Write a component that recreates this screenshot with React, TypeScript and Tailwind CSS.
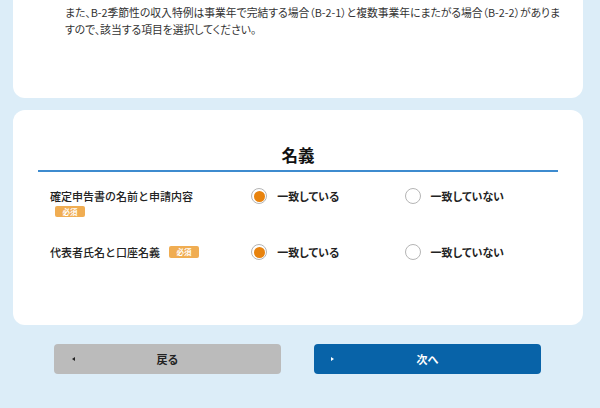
const font = { fontFamily: '"Noto Sans CJK JP", "Noto Sans", sans-serif' }

type Item = { label: string; inlineBadge: boolean; value: 'yes' | 'no' }

const items: Item[] = [
  { label: '確定申告書の名前と申請内容', inlineBadge: false, value: 'yes' },
  { label: '代表者氏名と口座名義', inlineBadge: true, value: 'yes' },
]

function Badge({ className = '' }: { className?: string }) {
  return (
    <span
      className={`flex h-[11px] w-[30px] items-center justify-center rounded-[2px] bg-[#f0ad52] text-[7.5px] font-bold leading-none text-white ${className}`}
    >
      必須
    </span>
  )
}

function Radio({ checked, label }: { checked: boolean; label: string }) {
  return (
    <label className="flex w-[154px] items-center gap-[10px]">
      <span className="flex h-[16px] w-[16px] items-center justify-center rounded-full border border-[#b5b5b5] bg-white">
        {checked && <span className="h-[11px] w-[11px] rounded-full bg-[#e8830e]" />}
      </span>
      <span className="text-[11px] font-bold leading-[16px] text-[#222] [font-feature-settings:'palt']">{label}</span>
    </label>
  )
}

export default function App() {
  return (
    <div className="h-[408px] w-[600px] overflow-hidden bg-[#dcedf8]" style={font}>
      <div className="ml-[13px] mr-[17px] -mt-[20px] h-[118px] rounded-[12px] bg-white pl-[52px] pt-[24px]">
        <p className="whitespace-nowrap text-[10.8px] leading-[17px] text-[#333] [font-feature-settings:'palt']">
          また、B-2季節性の収入特例は事業年で完結する場合（B-2-1）と複数事業年にまたがる場合（B-2-2）がありま
          <br />
          すので、該当する項目を選択してください。
        </p>
      </div>

      <div className="ml-[13px] mr-[17px] mt-[12px] h-[215px] rounded-[12px] bg-white px-[25px] pt-[33px]">
        <h2 className="border-b-2 border-[#3d8bcf] pb-[3px] text-center text-[16.5px] font-bold leading-[24px] text-[#111]">
          名義
        </h2>

        <div className="flex flex-col gap-[27px] pl-[12px] pt-[16px]">
          {items.map((item) => (
            <div key={item.label} className="flex items-start">
              <div className="w-[202px]">
                <div className="flex items-center gap-[9px] text-[11px] font-medium leading-[16px] text-[#222]">
                  {item.label}
                  {item.inlineBadge && <Badge className="h-[12px]" />}
                </div>
                {!item.inlineBadge && <Badge className="ml-[5px] mt-[2px]" />}
              </div>
              <Radio checked={item.value === 'yes'} label="一致している" />
              <Radio checked={item.value === 'no'} label="一致していない" />
            </div>
          ))}
        </div>
      </div>

      <div className="ml-[54px] mt-[19px] flex gap-[33px]">
        <button className="relative flex h-[30px] w-[227px] items-center justify-center rounded-[4px] bg-[#bbbbbb] text-[11px] font-bold text-[#222]">
          <span className="absolute left-[18px] top-1/2 h-0 w-0 -translate-y-1/2 border-y-[2.5px] border-r-[3px] border-y-transparent border-r-[#222]" />
          戻る
        </button>
        <button className="relative flex h-[30px] w-[227px] items-center justify-center rounded-[4px] bg-[#0863a8] text-[11px] font-bold text-white">
          <span className="absolute left-[17px] top-1/2 h-0 w-0 -translate-y-1/2 border-y-[2.5px] border-l-[3px] border-y-transparent border-l-white" />
          次へ
        </button>
      </div>
    </div>
  )
}
